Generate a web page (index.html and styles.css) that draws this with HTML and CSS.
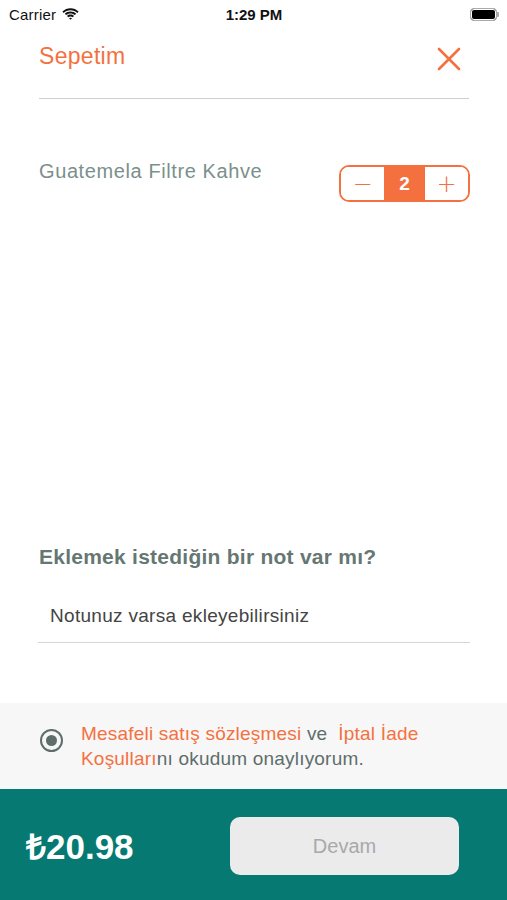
FILE: index.html
```html
<!DOCTYPE html>
<html lang="tr">
<head>
  <meta charset="UTF-8">
  <meta name="viewport" content="width=device-width, initial-scale=1.0">
  <title>Sepetim</title>
  <link rel="stylesheet" href="styles.css">
</head>
<body>
  <div class="screen">
    <div class="status-bar">
      <div class="carrier">
        Carrier
        <svg class="wifi" width="17" height="12" viewBox="0 0 17 12">
          <path d="M8.5 2.2c2.6 0 5 1 6.8 2.7l1.3-1.3C14.4 1.5 11.6.3 8.5.3S2.6 1.5.4 3.6l1.3 1.3C3.5 3.2 5.9 2.2 8.5 2.2z" fill="#111"/>
          <path d="M8.5 5.4c1.7 0 3.2.6 4.4 1.7l1.3-1.3C12.7 4.3 10.7 3.5 8.5 3.5S4.3 4.3 2.8 5.8l1.3 1.3c1.2-1.1 2.7-1.7 4.4-1.7z" fill="#111"/>
          <path d="M8.5 8.5c.9 0 1.6.3 2.2.8l1.3-1.3c-.9-.9-2.1-1.4-3.5-1.4S5.9 7.1 5 8l1.3 1.3c.6-.5 1.3-.8 2.2-.8z" fill="#111"/>
          <path d="M8.5 11.8 10 10.3c-.4-.4-.9-.6-1.5-.6s-1.1.2-1.5.6z" fill="#111"/>
        </svg>
      </div>
      <div class="clock">1:29 PM</div>
      <div class="battery"><span class="battery-level"></span></div>
    </div>

    <header class="cart-header">
      <h1>Sepetim</h1>
      <button class="close-btn" aria-label="Kapat">
        <svg width="24" height="24" viewBox="0 0 24 24">
          <path d="M2 2 22 22M22 2 2 22" stroke="#f4713f" stroke-width="2.6" stroke-linecap="round"/>
        </svg>
      </button>
    </header>

    <div class="cart-items">
      <div class="cart-item">
        <span class="item-name">Guatemela Filtre Kahve</span>
        <div class="stepper">
          <button class="step">&minus;</button>
          <span class="qty">2</span>
          <button class="step">+</button>
        </div>
      </div>
    </div>

    <div class="note">
      <h2>Eklemek istediğin bir not var mı?</h2>
      <input class="note-input" type="text" placeholder="Notunuz varsa ekleyebilirsiniz">
    </div>

    <div class="agreement">
      <span class="radio"><span class="radio-dot"></span></span>
      <p><a href="#">Mesafeli satış sözleşmesi</a> ve &nbsp;<a href="#">İptal İade Koşulları</a>nı okudum onaylıyorum.</p>
    </div>

    <footer class="checkout">
      <span class="total">₺20.98</span>
      <button class="continue" disabled>Devam</button>
    </footer>
  </div>
</body>
</html>
```

FILE: styles.css
```css
* {
  box-sizing: border-box;
}

body {
  margin: 0;
  font-family: "Liberation Sans", Arial, sans-serif;
  background: #fff;
}

.screen {
  height: 900px;
  display: flex;
  flex-direction: column;
}

.status-bar {
  height: 28px;
  display: flex;
  align-items: center;
  justify-content: space-between;
  padding: 0 8px 0 9px;
  font-size: 15px;
  color: #111;
}

.carrier {
  display: flex;
  align-items: center;
  gap: 6px;
  width: 120px;
  letter-spacing: 0.2px;
}

.clock {
  font-weight: bold;
  font-size: 15px;
}

.battery {
  width: 120px;
  display: flex;
  justify-content: flex-end;
}

.battery-level {
  display: block;
  width: 27px;
  height: 13px;
  border: 1px solid #aaa;
  border-radius: 4px;
  background: #000;
  box-shadow: inset 0 0 0 1px #fff;
}

.battery::after {
  content: "";
  width: 2px;
  height: 5px;
  background: #aaa;
  border-radius: 0 1px 1px 0;
  align-self: center;
}

.cart-header {
  margin: 0 38px 0 39px;
  height: 71px;
  display: flex;
  align-items: flex-start;
  justify-content: space-between;
  border-bottom: 1px solid #cfcfcf;
  padding-top: 15px;
}

.cart-header h1 {
  margin: 0;
  font-size: 23px;
  font-weight: normal;
  color: #f4713f;
  letter-spacing: 0.3px;
}

.close-btn {
  border: none;
  background: none;
  padding: 0;
  margin: 4px 8px 0 0;
  width: 24px;
  height: 24px;
}

.cart-items {
  flex: 1;
  padding: 60px 37px 0 39px;
}

.cart-item {
  display: flex;
  justify-content: space-between;
  align-items: flex-start;
}

.item-name {
  font-size: 20px;
  letter-spacing: 0.6px;
  color: #7b8f8b;
  margin-top: 1px;
}

.stepper {
  display: flex;
  width: 131px;
  height: 37px;
  margin-top: 6px;
  border: 2px solid #f4713f;
  border-radius: 10px;
  overflow: hidden;
}

.step {
  flex: 1;
  border: none;
  background: #fff;
  color: #f4713f;
  font-size: 24px;
  font-weight: 300;
  padding: 0;
  font-family: "DejaVu Sans", sans-serif;
}

.qty {
  width: 41px;
  background: #f4713f;
  color: #fff;
  font-weight: bold;
  font-size: 19px;
  display: flex;
  align-items: center;
  justify-content: center;
}

.note {
  padding: 0 37px 60px 38px;
}

.note h2 {
  margin: 0 0 36px 1px;
  font-size: 21px;
  letter-spacing: 0.25px;
  color: #667773;
}

.note-input {
  width: 100%;
  border: none;
  border-bottom: 1px solid #d6d6d6;
  padding: 0 0 15px 12px;
  font-size: 19px;
  letter-spacing: 0.3px;
  font-family: "Liberation Sans", Arial, sans-serif;
  outline: none;
}

.note-input::placeholder {
  color: #444;
}

.agreement {
  background: #f7f7f7;
  height: 86px;
  display: flex;
  align-items: flex-start;
  padding: 18px 20px 0 40px;
  gap: 18px;
}

.radio {
  width: 23px;
  height: 23px;
  margin-top: 8px;
  flex-shrink: 0;
  border: 2.5px solid #5e6e6b;
  border-radius: 50%;
  display: flex;
  align-items: center;
  justify-content: center;
}

.radio-dot {
  width: 11px;
  height: 11px;
  border-radius: 50%;
  background: #5e6e6b;
}

.agreement p {
  margin: 0;
  max-width: 360px;
  font-size: 19px;
  letter-spacing: 0.2px;
  line-height: 25px;
  color: #5e6e6b;
}

.agreement a {
  color: #f4713f;
  text-decoration: none;
}

.checkout {
  height: 111px;
  background: #067a72;
  display: flex;
  align-items: center;
  justify-content: space-between;
  padding: 0 48px 0 26px;
}

.total {
  color: #fff;
  font-size: 35px;
  font-weight: bold;
  margin-top: 1px;
}

.continue {
  width: 229px;
  height: 58px;
  margin-top: 3px;
  border: none;
  border-radius: 10px;
  background: #ebebeb;
  color: #a9a9a9;
  font-size: 20px;
  font-family: "Liberation Sans", Arial, sans-serif;
}
```
